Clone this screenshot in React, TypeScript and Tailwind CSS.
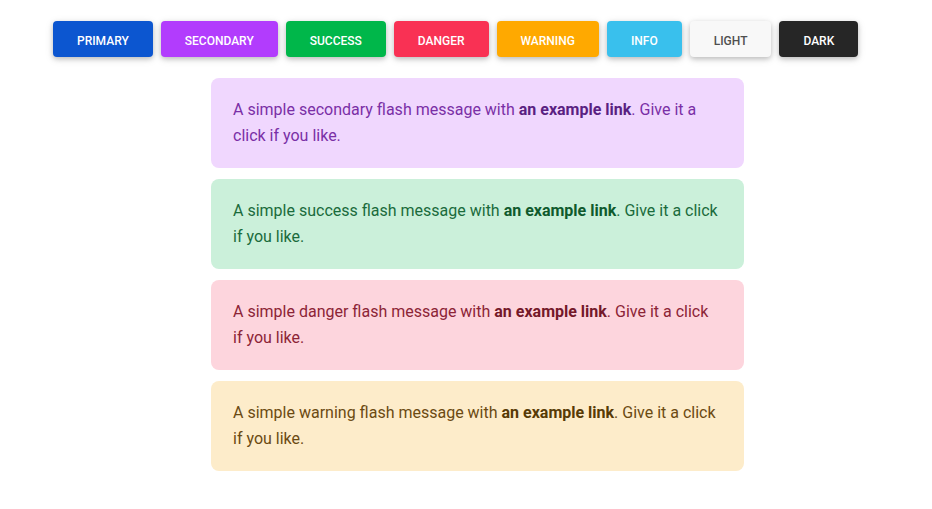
const buttons = [
  { label: 'Primary', cls: 'bg-[#0c56d0] text-white' },
  { label: 'Secondary', cls: 'bg-[#b23cfd] text-white' },
  { label: 'Success', cls: 'bg-[#00b74a] text-white' },
  { label: 'Danger', cls: 'bg-[#f93154] text-white' },
  { label: 'Warning', cls: 'bg-[#ffa900] text-white' },
  { label: 'Info', cls: 'bg-[#39c0ed] text-white' },
  { label: 'Light', cls: 'bg-[#f8f8f8] text-[#4f4f4f]' },
  { label: 'Dark', cls: 'bg-[#262626] text-white' },
];

const alerts = [
  { kind: 'secondary', box: 'bg-[#f0d7fe] text-[#7a2fa6]', link: 'text-[#5a1f82]' },
  { kind: 'success', box: 'bg-[#cbf0da] text-[#1a6b3c]', link: 'text-[#0f5a2d]' },
  { kind: 'danger', box: 'bg-[#fdd5dd] text-[#8c2436]', link: 'text-[#741829]' },
  { kind: 'warning', box: 'bg-[#fdecca] text-[#6b4a12]', link: 'text-[#573a06]' },
];

export default function App() {
  return (
    <div className="min-h-[509px] bg-white font-['Roboto',sans-serif]">
      <div className="flex gap-2 pt-[21px] pl-[53px]">
        {buttons.map(b => (
          <button
            key={b.label}
            className={`h-9 px-6 pt-[3px] rounded-[4px] text-xs font-medium uppercase shadow-[0_2px_5px_0_rgba(0,0,0,0.2),0_2px_10px_0_rgba(0,0,0,0.1)] ${b.cls}`}
          >
            {b.label}
          </button>
        ))}
      </div>

      <div className="ml-[211px] mt-[21px] w-[533px] flex flex-col gap-[11px]">
        {alerts.map(a => (
          <div key={a.kind} className={`rounded-lg pl-[22px] pr-[24px] pt-[19px] pb-[19px] text-base leading-[26px] ${a.box}`}>
            A simple {a.kind} flash message with <a className={`font-bold ${a.link}`}>an example link</a>. Give it a click if you like.
          </div>
        ))}
      </div>
    </div>
  );
}
